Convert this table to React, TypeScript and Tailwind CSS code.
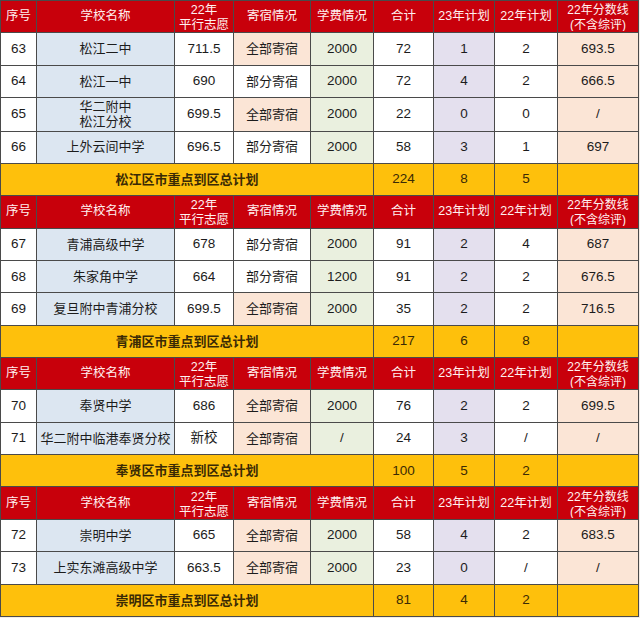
type Row = {
  no: string;
  name: string[];
  wish: string;
  board: '全部寄宿' | '部分寄宿';
  fee: string;
  total: string;
  plan23: string;
  plan22: string;
  score: string;
};

type Section = {
  title: string;
  rows: Row[];
  sum: [string, string, string];
};

const sections: Section[] = [
  {
    title: '松江区市重点到区总计划',
    sum: ['224', '8', '5'],
    rows: [
      { no: '63', name: ['松江二中'], wish: '711.5', board: '全部寄宿', fee: '2000', total: '72', plan23: '1', plan22: '2', score: '693.5' },
      { no: '64', name: ['松江一中'], wish: '690', board: '部分寄宿', fee: '2000', total: '72', plan23: '4', plan22: '2', score: '666.5' },
      { no: '65', name: ['华二附中', '松江分校'], wish: '699.5', board: '全部寄宿', fee: '2000', total: '22', plan23: '0', plan22: '0', score: '/' },
      { no: '66', name: ['上外云间中学'], wish: '696.5', board: '部分寄宿', fee: '2000', total: '58', plan23: '3', plan22: '1', score: '697' },
    ],
  },
  {
    title: '青浦区市重点到区总计划',
    sum: ['217', '6', '8'],
    rows: [
      { no: '67', name: ['青浦高级中学'], wish: '678', board: '部分寄宿', fee: '2000', total: '91', plan23: '2', plan22: '4', score: '687' },
      { no: '68', name: ['朱家角中学'], wish: '664', board: '部分寄宿', fee: '1200', total: '91', plan23: '2', plan22: '2', score: '676.5' },
      { no: '69', name: ['复旦附中青浦分校'], wish: '699.5', board: '全部寄宿', fee: '2000', total: '35', plan23: '2', plan22: '2', score: '716.5' },
    ],
  },
  {
    title: '奉贤区市重点到区总计划',
    sum: ['100', '5', '2'],
    rows: [
      { no: '70', name: ['奉贤中学'], wish: '686', board: '全部寄宿', fee: '2000', total: '76', plan23: '2', plan22: '2', score: '699.5' },
      { no: '71', name: ['华二附中临港奉贤分校'], wish: '新校', board: '全部寄宿', fee: '/', total: '24', plan23: '3', plan22: '/', score: '/' },
    ],
  },
  {
    title: '崇明区市重点到区总计划',
    sum: ['81', '4', '2'],
    rows: [
      { no: '72', name: ['崇明中学'], wish: '665', board: '全部寄宿', fee: '2000', total: '58', plan23: '4', plan22: '2', score: '683.5' },
      { no: '73', name: ['上实东滩高级中学'], wish: '663.5', board: '全部寄宿', fee: '2000', total: '23', plan23: '0', plan22: '/', score: '/' },
    ],
  },
];

const cols = [36, 138, 59, 77, 63, 60, 61, 63, 81];

const td = 'border border-[#4a4a4a] p-0 text-center align-middle whitespace-nowrap';

function HeaderRow() {
  return (
    <tr className="h-[30px] bg-[#c8000b] text-[12.5px] leading-[15px] text-[#fff0f0]">
      <td className={td}>序号</td>
      <td className={td}>学校名称</td>
      <td className={td}>
        <div className="h-[29px] overflow-hidden pt-[1px]">
          22年
          <br />
          平行志愿
        </div>
      </td>
      <td className={td}>寄宿情况</td>
      <td className={td}>学费情况</td>
      <td className={td}>合计</td>
      <td className={td}>23年计划</td>
      <td className={td}>22年计划</td>
      <td className={td}>
        <div className="h-[29px] overflow-hidden pt-[1px] text-[12px]">
          22年分数线
          <br />
          (不含综评)
        </div>
      </td>
    </tr>
  );
}

function DataRow({ r }: { r: Row }) {
  return (
    <tr className="h-[30px] text-[13.5px] text-[#1c1c1c]">
      <td className={`${td} bg-white`}>{r.no}</td>
      <td className={`${td} bg-[#dce6f1] text-[13px]`}>
        {r.name.length > 1 ? (
          <div className="leading-[15px]">
            {r.name[0]}
            <br />
            {r.name[1]}
          </div>
        ) : (
          r.name[0]
        )}
      </td>
      <td className={`${td} bg-white`}>{r.wish}</td>
      <td className={`${td} text-[13px] ${r.board === '全部寄宿' ? 'bg-[#fbe5d6]' : 'bg-white'}`}>{r.board}</td>
      <td className={`${td} bg-[#eaf0df]`}>{r.fee}</td>
      <td className={`${td} bg-white`}>{r.total}</td>
      <td className={`${td} bg-[#e4e0ee]`}>{r.plan23}</td>
      <td className={`${td} bg-white`}>{r.plan22}</td>
      <td className={`${td} bg-[#fbe5d6]`}>{r.score}</td>
    </tr>
  );
}

function SumRow({ s }: { s: Section }) {
  return (
    <tr className="h-[30px] bg-[#fec00c] text-[13.5px] text-[#3a2a05]">
      <td colSpan={5} className={`${td} text-[13px] font-semibold`}>
        {s.title}
      </td>
      <td className={td}>{s.sum[0]}</td>
      <td className={td}>{s.sum[1]}</td>
      <td className={td}>{s.sum[2]}</td>
      <td className={td}></td>
    </tr>
  );
}

export default function App() {
  return (
    <div
      className="h-[618px] w-[640px] overflow-hidden bg-[#f3ece6]"
      style={{ fontFamily: '"Liberation Sans", "Noto Sans CJK SC", sans-serif' }}
    >
      <table className="h-[617px] w-[638px] table-fixed border-collapse">
        <colgroup>
          {cols.map((w, i) => (
            <col key={i} style={{ width: w }} />
          ))}
        </colgroup>
        <tbody>
          {sections.map((s) => (
            <>
              <HeaderRow key={s.title + 'h'} />
              {s.rows.map((r) => (
                <DataRow key={r.no} r={r} />
              ))}
              <SumRow key={s.title} s={s} />
            </>
          ))}
        </tbody>
      </table>
    </div>
  );
}
